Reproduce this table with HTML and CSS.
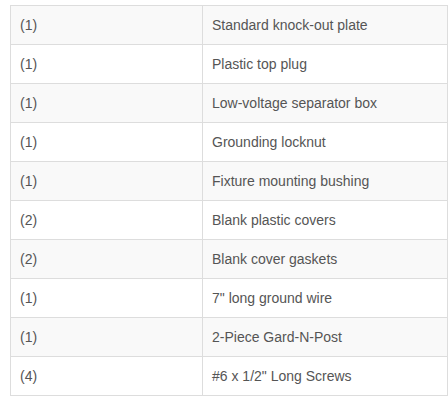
FILE: index.html
```html
<!DOCTYPE html>
<html>
<head>
<meta charset="utf-8">
<link rel="stylesheet" href="styles.css">
</head>
<body>
<div class="wrap">
<table class="parts">
<tbody>
<tr><td class="qty">(1)</td><td>Standard knock-out plate</td></tr>
<tr><td class="qty">(1)</td><td>Plastic top plug</td></tr>
<tr><td class="qty">(1)</td><td>Low-voltage separator box</td></tr>
<tr><td class="qty">(1)</td><td>Grounding locknut</td></tr>
<tr><td class="qty">(1)</td><td>Fixture mounting bushing</td></tr>
<tr><td class="qty">(2)</td><td>Blank plastic covers</td></tr>
<tr><td class="qty">(2)</td><td>Blank cover gaskets</td></tr>
<tr><td class="qty">(1)</td><td>7" long ground wire</td></tr>
<tr><td class="qty">(1)</td><td>2-Piece Gard-N-Post</td></tr>
<tr><td class="qty">(4)</td><td>#6 x 1/2" Long Screws</td></tr>
</tbody>
</table>
</div>
</body>
</html>
```
FILE: styles.css
```css
html, body {
  margin: 0;
  padding: 0;
  background: #fff;
}
.wrap {
  padding: 5px 0 0 10px;
}
.parts {
  width: 438px;
  border-collapse: collapse;
  font-family: "Liberation Sans", Arial, sans-serif;
  font-size: 14px;
  color: #555;
  border: 1px solid #ddd;
}
.parts td {
  border: 1px solid #ddd;
  padding: 0 9px;
  height: 38px;
  line-height: 20px;
  vertical-align: middle;
}
.parts td.qty {
  width: 173px;
}
.parts tr:nth-child(odd) td {
  background: #f9f9f9;
}
```
